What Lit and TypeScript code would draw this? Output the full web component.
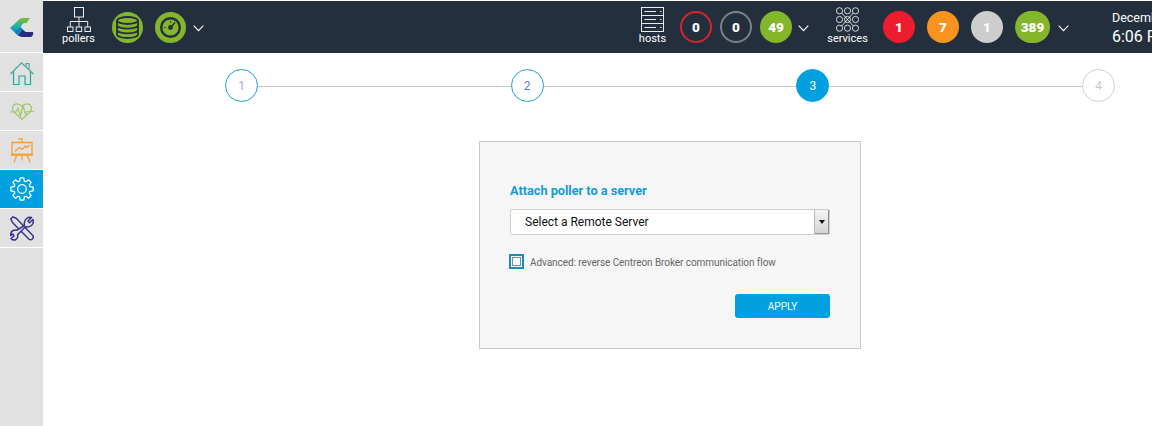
import { LitElement, html, css, svg } from "lit";
import { customElement } from "lit/decorators.js";

const chevron = html`<svg class="chev" viewBox="0 0 11 7" width="11" height="7"><path d="M.7.7 5.500 5.600 10.300.7" fill="none" stroke="#fff" stroke-width="1.100"/></svg>`;

const logo = html`<svg class="logo-svg" width="24" height="20" viewBox="0 0 24 20">
  <defs>
    <linearGradient id="lg" x1="0.400" y1="0" x2="0.200" y2="1">
      <stop offset="0" stop-color="#6fbe35"/>
      <stop offset=".45" stop-color="#1fb0a8"/>
      <stop offset=".8" stop-color="#0a8fd0"/>
    </linearGradient>
  </defs>
  <path d="M0 10 9.500 1.200Q11 0 14 0H20L16.500 5H15Q13.500 5 12.500 6L10.500 9.500 16 14 8.500 18Z" fill="url(#lg)"/>
  <path d="M10.500 9.500 14.500 13.400Q15 14 16 14H23Q24 17 21 19H13Q10.500 19 8.500 17.500L5 14.500Z" fill="#2b2a7c"/>
  <path d="M5 14.500 10.500 9.500 12.500 11.500 8.500 17.500Z" fill="#0f86c8"/>
</svg>`;

const pollers = html`<svg width="24" height="25" viewBox="0 0 24 25" fill="none" stroke="#fff" stroke-width=".9">
  <rect x="7.500" y=".5" width="9" height="9.500"/><path d="M12 10V20M3.300 20V14.500H20.700V20"/>
  <rect x=".5" y="20" width="5.500" height="4.500"/><rect x="9.200" y="20" width="5.500" height="4.500"/><rect x="18" y="20" width="5.500" height="4.500"/>
</svg>`;

const db = html`<svg width="31" height="31" viewBox="0 0 31 31">
  <circle cx="15.500" cy="15.500" r="15.500" fill="#84b62c"/>
  <g fill="none" stroke="#232f3d" stroke-width="1.800">
    <ellipse cx="15.500" cy="8.500" rx="10.500" ry="3.500"/>
    <path d="M5 8.500V22.500C5 24.500 10 26 15.500 26S26 24.500 26 22.500V8.500M5 13.200C5 15.200 10 16.700 15.500 16.700S26 15.200 26 13.200M5 17.900C5 19.900 10 21.400 15.500 21.400S26 19.900 26 17.900"/>
  </g>
</svg>`;

const gauge = html`<svg width="31" height="31" viewBox="0 0 31 31">
  <circle cx="15.500" cy="15.500" r="15.500" fill="#84b62c"/>
  <circle cx="15.500" cy="15.500" r="9.300" fill="none" stroke="#232f3d" stroke-width="2.400"/>
  <circle cx="15.500" cy="15.500" r="2.400" fill="#232f3d"/>
  <path d="M15.500 15.500 20 10.500" stroke="#232f3d" stroke-width="1.500"/>
  <path d="M15.500 9v1.500M9 15.500h1.500" stroke="#232f3d" stroke-width="1"/>
</svg>`;

const hostsIcon = html`<svg width="23" height="25" viewBox="0 0 23 25" fill="none" stroke="#fff" stroke-width=".9">
  <rect x=".5" y=".5" width="22" height="24"/><path d="M.5 8.500H22.500M.5 16.500H22.500"/>
  <path d="M3.500 4.500H15M3.500 12.500H15M3.500 20.500H15M19 4.500h1.500M19 12.500h1.500M19 20.500h1.500"/>
</svg>`;

const servicesIcon = html`<svg width="23" height="25" viewBox="0 0 23 25" fill="none" stroke="#fff" stroke-width=".8">
  ${[3.8, 12.5, 21.2].flatMap((y) => [3.5, 11.5, 19.5].map((x) => svg`<circle cx=${x} cy=${y} r="3.100"/>`))}
  <path d="M5.700 6 17.300 19M17.300 6 5.700 19"/>
</svg>`;

const homeIcon = html`<svg class="home" width="24" height="23" viewBox="0 0 24 23" fill="none" stroke-width="1.200">
  <path d="M.5 12 11.500.8 23.500 12" stroke="#4aa79a"/><path d="M16 4.500V1.500H19V7.500" stroke="#4aa79a"/>
  <path d="M3.500 9.500V22.500H9V14H15V22.500H20.500V9.500" stroke="#2ba69a"/>
</svg>`;

const heartIcon = html`<svg width="24" height="17" viewBox="0 0 24 17" fill="none" stroke="#a4c56a" stroke-width="1.200">
  <path d="M12 16.300 4 9C1 5.500 3 .8 7 .8 9.500 .8 11 2.500 12 3.500 13 2.500 14.500 .8 17 .8 21 .8 23 5.500 20 9Z"/>
  <path d="M0 9H6L8 5 10.500 13 13 3 15.500 11 17 8.500H24"/>
</svg>`;

const boardIcon = html`<svg width="22" height="25" viewBox="0 0 22 25" fill="none" stroke="#f5a033" stroke-width="1.300">
  <path d="M1 4.500H21V16.500H1ZM11 4.500V.8H7M6 16.500 3 24.500M16 16.500 19 24.500M11 16.500V22.500"/>
  <path d="M0 16.800H22" stroke-width="2"/>
  <path d="M4 13.500 8.500 9.500 11 11.500 14.500 8 16 9.500 18.500 7"/>
</svg>`;

function gearPath(): string {
  const cx = 12;
  const cy = 12;
  const pts: string[] = [];
  const teeth = 8;
  for (let i = 0; i < teeth; i++) {
    const a = (i / teeth) * Math.PI * 2 - Math.PI / 2;
    const step = (Math.PI * 2) / teeth;
    const seq: [number, number][] = [
      [8.3, a - step * 0.36],
      [11.3, a - step * 0.2],
      [11.3, a + step * 0.2],
      [8.3, a + step * 0.36],
    ];
    for (const [r, t] of seq) {
      pts.push(`${(cx + r * Math.cos(t)).toFixed(2)} ${(cy + r * Math.sin(t)).toFixed(2)}`);
    }
  }
  return `M${pts.join("L")}Z`;
}

const gearIcon = html`<svg width="24" height="24" viewBox="0 0 24 24" fill="none" stroke="#fff" stroke-width="1.300">
  <path d=${gearPath()} stroke-linejoin="round"/>
  <circle cx="12" cy="12" r="4.300"/>
</svg>`;

const toolsIcon = html`<svg width="24" height="25" viewBox="0 0 24 25" fill="#e1e1e1" stroke="#3a3291" stroke-width="1.500" stroke-linejoin="round">
  <path d="M.8 3 3 .8 6.500 2.500 22.800 19.500Q24 21.500 22.300 23 20.500 24.500 18.800 23L2.500 6.500Z"/>
  <path d="M14.500 9.500Q13.500 5 16.500 2.500 19 .8 21.500 1.500L18 5 19.500 6.800 23 3.500Q24 7 21.500 9.500 18.500 11.500 15.500 10.800L7.500 18.800Q8.500 21.500 6 23.500 3 25 1 22.500L4 20 3 18 .7 19.500Q.3 16 3 14.500 5 13.500 7 14.200Z"/>
</svg>`;

@customElement("app-root")
export class AppRoot extends LitElement {
  static styles = css`
    :host {
      display: grid;
      grid-template-columns: 43px 1fr;
      width: 100%;
      height: 100vh;
      overflow: hidden;
      background: #fff;
      font-family: Roboto, "Liberation Sans", sans-serif;
    }
    .side {
      display: flex;
      flex-direction: column;
      gap: 1px;
      background: #fff;
    }
    .cell {
      flex: none;
      height: 38px;
      background: #e1e1e1;
      display: flex;
      align-items: center;
      justify-content: center;
    }
    .cell svg { display: block; }
    .cell.logo { height: 52px; box-sizing: border-box; padding-top: 3px; }
    .cell.active { background: #00a0e1; }
    .cell.rest { flex: 1; }
    .home { margin-top: 3px; }
    .main { display: flex; flex-direction: column; min-width: 0; }
    .top {
      flex: none;
      height: 52px;
      margin-top: 1px;
      background: #232f3d;
      color: #fff;
      display: flex;
      align-items: center;
      padding-left: 19px;
      overflow: hidden;
    }
    .group { display: flex; align-items: center; }
    .left { flex: 1; }
    .tool {
      display: flex;
      flex-direction: column;
      align-items: center;
      gap: 1px;
      margin-top: -2px;
      font-size: 11px;
      line-height: 12px;
      white-space: nowrap;
    }
    .tool svg { display: block; }
    .pollers { width: 33px; margin-right: 17px; }
    .db { margin-right: 12px; display: block; }
    .db svg, .left > svg { display: block; }
    .chev { display: block; flex: none; margin-top: 2px; }
    .left .chev { margin-left: 7px; }
    .hosts { width: 27px; margin-right: 14px; }
    .services { width: 39px; margin-right: 16px; }
    .dot {
      box-sizing: border-box;
      flex: none;
      width: 32px;
      height: 32px;
      border-radius: 16px;
      display: flex;
      align-items: center;
      justify-content: center;
      font-size: 13.500px;
      font-weight: 900;
      color: #fff;
    }
    .dots-a { gap: 8px; }
    .dots-b { gap: 12px; }
    .dot.ring-red { border: 2px solid #d9232e; }
    .dot.ring-grey { border: 2px solid #7d8185; }
    .dot.green { background: #84b62c; }
    .dot.red { background: #ed1c2e; }
    .dot.orange { background: #f7931e; }
    .dot.silver { background: #cdcdcd; }
    .dot.wide { width: 35px; }
    .chev-a { margin: 0 19px 0 6px; }
    .chev-b { margin: 0 43px 0 8px; }
    .date {
      flex: none;
      width: 40px;
      overflow: hidden;
      white-space: nowrap;
      font-size: 12.500px;
      line-height: 17px;
      margin-top: 1px;
    }
    .date .time { font-size: 16px; line-height: 21px; }
    .steps {
      display: flex;
      align-items: center;
      margin: 16px 0 0 182px;
      width: 890px;
    }
    .step {
      box-sizing: border-box;
      flex: none;
      width: 33px;
      height: 33px;
      border-radius: 50%;
      border: 1px solid #1a9fd8;
      display: flex;
      align-items: center;
      justify-content: center;
      font-size: 12px;
    }
    .step.one { color: #a9a9d8; }
    .step.two { color: #5a7fc0; }
    .step.three { background: #00a0e1; border-color: #00a0e1; color: #fff; }
    .step.four { border-color: #cfcfcf; color: #c9c9c9; }
    .link { flex: 1; height: 1px; margin-top: 2px; background: #c8c8c8; }
    .panel {
      box-sizing: border-box;
      width: 382px;
      height: 208px;
      margin: 39px 0 0 436px;
      border: 1px solid #c9c9c9;
      background: #f6f6f6;
      padding: 41px 30px 0 30px;
      display: flex;
      flex-direction: column;
    }
    .title {
      font-size: 12.700px;
      line-height: 16px;
      font-weight: 700;
      color: #0e9ddc;
    }
    .select {
      box-sizing: border-box;
      margin-top: 10px;
      height: 26px;
      background: #fff;
      border: 1px solid #cfcfcf;
      border-radius: 2px;
      display: flex;
      align-items: center;
      justify-content: space-between;
      font-size: 12px;
      color: #111;
      padding-left: 14px;
    }
    .arrow {
      box-sizing: border-box;
      width: 15px;
      height: 24px;
      background: linear-gradient(#f4f4f4, #d4d4d4);
      border-left: 1px solid #bcbcbc;
      border-right: 1px solid #8f8f8f;
      border-bottom: 1px solid #9a9a9a;
      display: flex;
      align-items: center;
      justify-content: center;
    }
    .caret {
      width: 0;
      height: 0;
      border: 3px solid transparent;
      border-top: 4px solid #111;
      border-bottom: 0;
    }
    .check {
      display: flex;
      align-items: center;
      gap: 6px;
      margin: 19px 0 0 -1px;
      font-size: 10px;
      letter-spacing: -.07px;
      color: #666;
    }
    .check span.label { padding-top: 1px; }
    .box {
      box-sizing: border-box;
      flex: none;
      width: 15px;
      height: 15px;
      border: 2px solid #168fb8;
      display: flex;
      align-items: center;
      justify-content: center;
    }
    .box i {
      display: block;
      box-sizing: border-box;
      width: 9px;
      height: 9px;
      border: 1px solid #6f8f9c;
      background: #fbfbfb;
    }
    .apply {
      align-self: flex-end;
      width: 95px;
      height: 24px;
      margin-top: 25px;
      border-radius: 3px;
      background: #00a0e1;
      color: #fff;
      font-size: 10px;
      display: flex;
      align-items: center;
      justify-content: center;
    }
  `;

  render() {
    return html`
      <nav class="side">
        <div class="cell logo">${logo}</div>
        <div class="cell">${homeIcon}</div>
        <div class="cell">${heartIcon}</div>
        <div class="cell">${boardIcon}</div>
        <div class="cell active">${gearIcon}</div>
        <div class="cell">${toolsIcon}</div>
        <div class="cell rest"></div>
      </nav>
      <div class="main">
        <header class="top">
          <div class="group left">
            <div class="tool pollers">${pollers}<span>pollers</span></div>
            <span class="db">${db}</span>
            ${gauge}
            ${chevron}
          </div>
          <div class="group">
            <div class="tool hosts">${hostsIcon}<span>hosts</span></div>
            <div class="group dots-a">
              <span class="dot ring-red">0</span>
              <span class="dot ring-grey">0</span>
              <span class="dot green">49</span>
            </div>
            <span class="group chev-a">${chevron}</span>
            <div class="tool services">${servicesIcon}<span>services</span></div>
            <div class="group dots-b">
              <span class="dot red">1</span>
              <span class="dot orange">7</span>
              <span class="dot silver">1</span>
              <span class="dot green wide">389</span>
            </div>
            <span class="group chev-b">${chevron}</span>
            <div class="date"><div>December 13, 2018</div><div class="time">6:06 PM</div></div>
          </div>
        </header>
        <div class="steps">
          <span class="step one">1</span><span class="link"></span>
          <span class="step two">2</span><span class="link"></span>
          <span class="step three">3</span><span class="link"></span>
          <span class="step four">4</span>
        </div>
        <section class="panel">
          <div class="title">Attach poller to a server</div>
          <div class="select"><span>Select a Remote Server</span><span class="arrow"><span class="caret"></span></span></div>
          <label class="check"><span class="box"><i></i></span><span class="label">Advanced: reverse Centreon Broker communication flow</span></label>
          <div class="apply">APPLY</div>
        </section>
      </div>
    `;
  }
}
